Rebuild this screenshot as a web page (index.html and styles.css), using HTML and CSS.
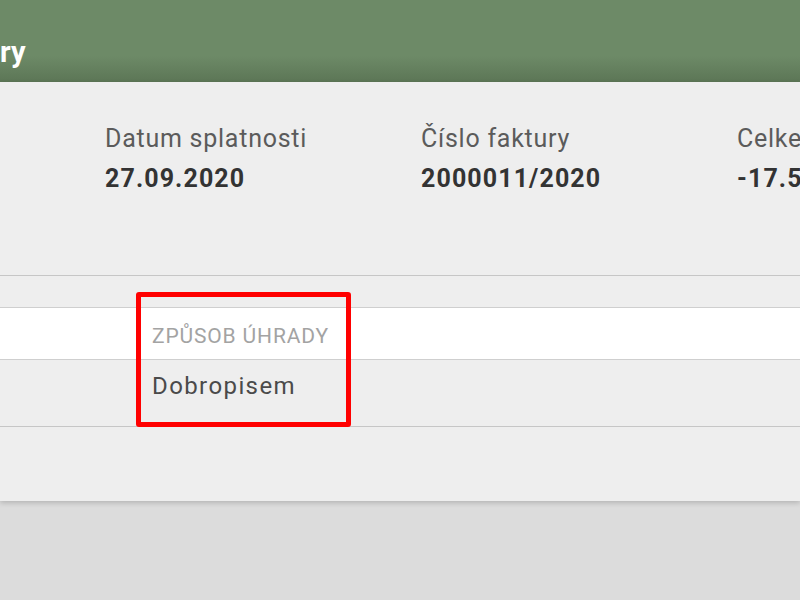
FILE: index.html
```html
<!DOCTYPE html>
<html lang="cs">
<head>
<meta charset="utf-8">
<title>Faktury</title>
<link rel="stylesheet" href="styles.css">
</head>
<body>
<div class="page">
  <header class="topbar">
    <h1 class="title">ry</h1>
  </header>
  <section class="panel">
    <div class="summary">
      <div class="field">
        <div class="field-label">Datum splatnosti</div>
        <div class="field-value">27.09.2020</div>
      </div>
      <div class="field">
        <div class="field-label">Číslo faktury</div>
        <div class="field-value">2000011/2020</div>
      </div>
      <div class="field">
        <div class="field-label">Celkem</div>
        <div class="field-value">-17.500,00 Kč</div>
      </div>
    </div>
    <div class="table">
      <div class="row-head">
        <div class="cell">ZPŮSOB ÚHRADY</div>
      </div>
      <div class="row-body">
        <div class="cell">Dobropisem</div>
      </div>
    </div>
    <div class="highlight"></div>
  </section>
</div>
</body>
</html>
```
FILE: styles.css
```css
html, body {
  margin: 0;
  padding: 0;
  background: #dcdcdc;
  font-family: Roboto, "Liberation Sans", sans-serif;
}
.page {
  width: 800px;
  height: 600px;
  overflow: hidden;
}
.topbar {
  height: 82px;
  background: linear-gradient(#6d8a67 0%, #6d8a67 68%, #5c7656 100%);
  display: flex;
  align-items: flex-start;
}
.title {
  margin: 0;
  padding: 34px 0 0 0;
  font-size: 29px;
  line-height: 36px;
  font-weight: 700;
  color: #ffffff;
}
.panel {
  position: relative;
  background: #eeeeee;
  height: 419px;
  box-shadow: 0 2px 5px rgba(0, 0, 0, 0.18);
}
.summary {
  display: grid;
  grid-template-columns: repeat(3, 316px);
  padding: 42px 0 0 105px;
  height: 151px;
  border-bottom: 1px solid #c6c6c6;
}
.field-label {
  font-size: 25px;
  line-height: 30px;
  color: #5b5b5b;
  letter-spacing: 0.75px;
  white-space: nowrap;
}
.field-value {
  font-size: 25px;
  line-height: 30px;
  font-weight: 700;
  color: #333333;
  letter-spacing: 1.1px;
  white-space: nowrap;
  margin-top: 10px;
}
.table {
  margin-top: 31px;
}
.row-head {
  background: #ffffff;
  border-top: 1px solid #cfcfcf;
  border-bottom: 1px solid #cfcfcf;
  height: 51px;
  display: flex;
  align-items: center;
  padding-left: 152px;
}
.row-head .cell {
  font-size: 21px;
  color: #a3a3a3;
  letter-spacing: 0.85px;
  padding-top: 5px;
}
.row-body {
  height: 66px;
  border-bottom: 1px solid #c6c6c6;
  display: flex;
  align-items: center;
  padding-left: 152px;
}
.row-body .cell {
  font-size: 24px;
  color: #4a4a4a;
  letter-spacing: 1.4px;
  padding-bottom: 14px;
}
.highlight {
  position: absolute;
  left: 136px;
  top: 210px;
  width: 205px;
  height: 125px;
  border: 5px solid #ff0000;
  border-radius: 3px;
}
```
